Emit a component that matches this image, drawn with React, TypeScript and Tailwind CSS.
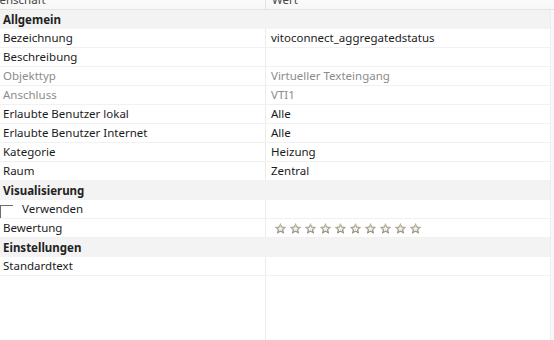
import React from "react";

type Row =
  | { kind: "group"; label: string }
  | { kind: "prop"; label: string; value?: string; muted?: boolean; check?: boolean; stars?: number };

const rows: Row[] = [
  { kind: "group", label: "Allgemein" },
  { kind: "prop", label: "Bezeichnung", value: "vitoconnect_aggregatedstatus" },
  { kind: "prop", label: "Beschreibung" },
  { kind: "prop", label: "Objekttyp", value: "Virtueller Texteingang", muted: true },
  { kind: "prop", label: "Anschluss", value: "VTI1", muted: true },
  { kind: "prop", label: "Erlaubte Benutzer lokal", value: "Alle" },
  { kind: "prop", label: "Erlaubte Benutzer Internet", value: "Alle" },
  { kind: "prop", label: "Kategorie", value: "Heizung" },
  { kind: "prop", label: "Raum", value: "Zentral" },
  { kind: "group", label: "Visualisierung" },
  { kind: "prop", label: "Verwenden", check: true },
  { kind: "prop", label: "Bewertung", stars: 10 },
  { kind: "group", label: "Einstellungen" },
  { kind: "prop", label: "Standardtext" },
];

function Star() {
  return (
    <svg width="13" height="13" viewBox="0 0 24 24" className="shrink-0">
      <defs>
        <linearGradient id="sg" x1="0" y1="0" x2="0" y2="1">
          <stop offset="0" stopColor="#cbc5b6" />
          <stop offset="1" stopColor="#857e6f" />
        </linearGradient>
      </defs>
      <path
        d="M12 1.5l3.2 6.9 7.4.8-5.5 5.1 1.5 7.4L12 17.9l-6.6 3.8 1.5-7.4-5.5-5.1 7.4-.8z"
        fill="url(#sg)"
      />
      <path
        d="M12 7.2l1.7 3.6 3.9.4-2.9 2.7.8 3.9L12 15.8l-3.5 2 .8-3.9-2.9-2.7 3.9-.4z"
        fill="#f4f2ec"
      />
    </svg>
  );
}

export default function App() {
  return (
    <div
      className="w-[554px] h-[340px] overflow-hidden bg-white text-[11.5px] text-[#1b1b1b] flex flex-col"
      style={{ fontFamily: '"Noto Sans", "Open Sans", sans-serif' }}
    >
      {/* column header, scrolled partly out of view */}
      <div className="h-[20px] mt-[-10px] shrink-0 flex border-b border-[#e3e3e3] bg-gradient-to-b from-white to-[#f7f7f7] text-[#444]">
        <div className="w-[266px] border-r border-[#e3e3e3] overflow-hidden flex items-center">
          <span className="ml-[-17px]">Eigenschaft</span>
        </div>
        <div className="flex-1 flex items-center pl-[6px]">Wert</div>
      </div>

      <div className="flex flex-1">
        <div className="w-[550px] flex flex-col">
          {rows.map((r, i) =>
            r.kind === "group" ? (
              <div
                key={i}
                className="h-[19px] flex items-center pl-[3px] bg-[#f3f3f3] font-bold text-[#222] leading-none"
              >
                {r.label}
              </div>
            ) : (
              <div key={i} className="h-[19px] flex border-b border-[#f1f1f1] leading-none">
                <div
                  className={`w-[266px] shrink-0 flex items-center border-r border-[#ececec] ${
                    r.check ? "pl-0" : "pl-[3px]"
                  } ${r.muted ? "text-[#8c8c8c]" : ""}`}
                >
                  {r.check && (
                    <span className="w-[13px] h-[13px] mt-[4px] mr-[9px] border-t border-r border-[#6d6d6d] -scale-x-100" />
                  )}
                  {r.label}
                </div>
                <div className={`flex-1 flex items-center pl-[5px] ${r.muted ? "text-[#8c8c8c]" : ""}`}>
                  {r.value}
                  {r.stars && (
                    <div className="flex gap-[2px] pl-[3px]">
                      {Array.from({ length: r.stars }).map((_, k) => (
                        <Star key={k} />
                      ))}
                    </div>
                  )}
                </div>
              </div>
            )
          )}
          <div className="flex flex-1">
            <div className="w-[266px] border-r border-[#ececec]" />
            <div className="flex-1" />
          </div>
        </div>
        <div className="flex-1 bg-[#f8f8f8] border-l border-[#ededed]" />
      </div>
    </div>
  );
}
